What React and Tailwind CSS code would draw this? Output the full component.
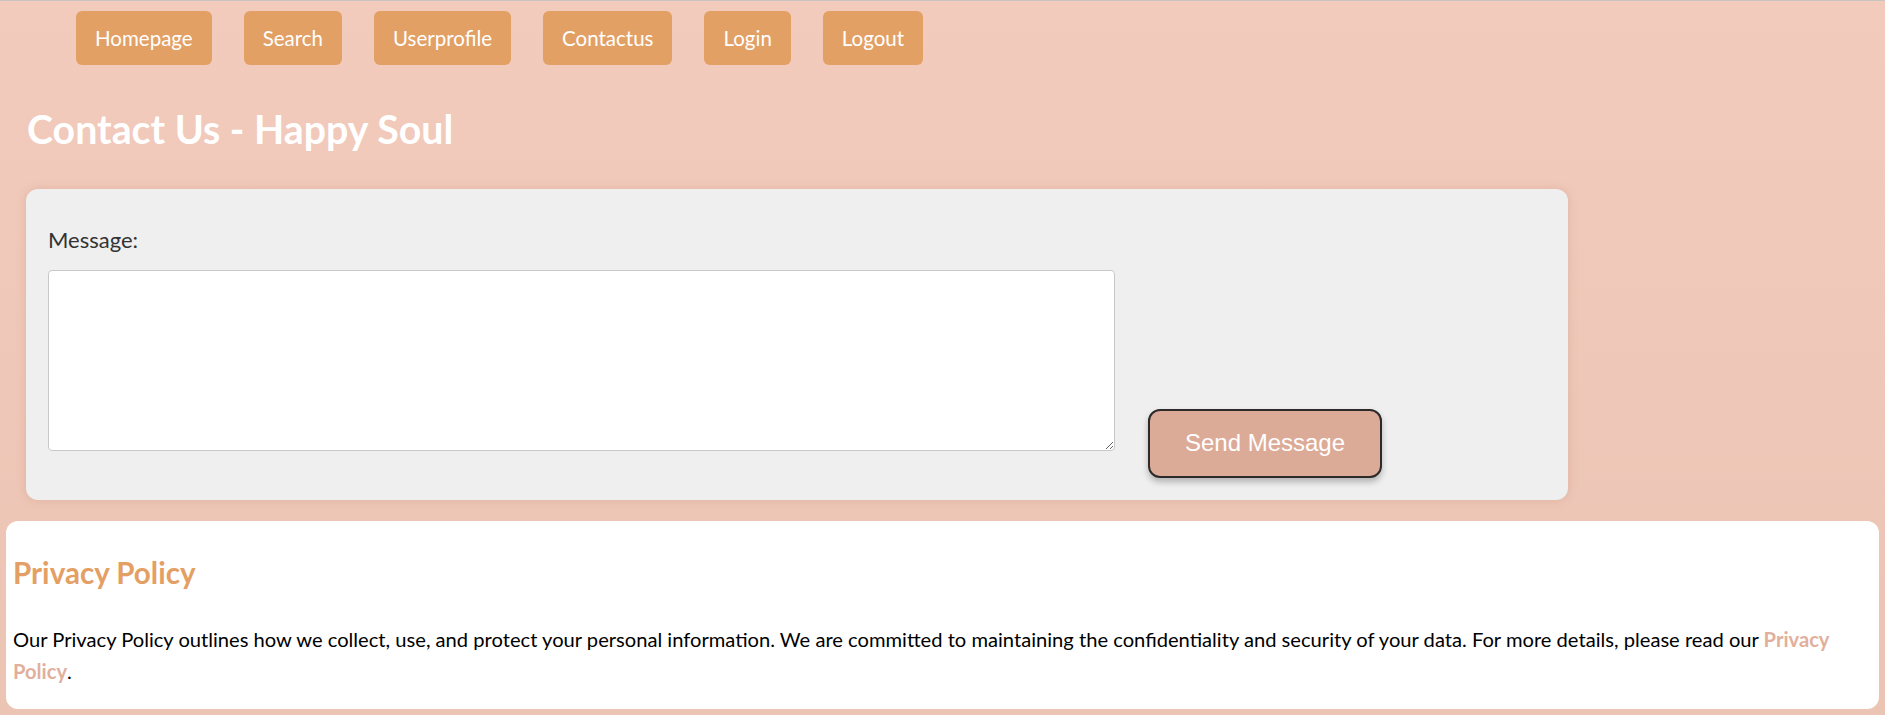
import { useState } from 'react';

const links = ['Homepage', 'Search', 'Userprofile', 'Contactus', 'Login', 'Logout'];

const App = () => {
  const [message, setMessage] = useState('');

  return (
    <div className="min-h-[715px] border-t border-[#c9c4c2] bg-gradient-to-b from-[#f2cbbc] to-[#ecc4b4] font-['Lato',sans-serif] text-black">
      {/* top navigation */}
      <nav className="flex gap-8 pl-[76px] pt-[10px]">
        {links.map((label) => (
          <a
            key={label}
            href="#"
            className="flex h-[54px] items-center rounded-[6px] bg-[#e3a064] px-[19px] text-[20.5px] text-white"
          >
            {label}
          </a>
        ))}
      </nav>

      <h1 className="ml-[27px] mt-[40px] text-[39.3px] font-bold leading-[1.2] text-white">
        Contact Us - Happy Soul
      </h1>

      {/* contact form card */}
      <form
        className="ml-[26px] mt-[37px] w-[1542px] rounded-[12px] bg-[#efefef] px-[22px] pb-[22px] pt-[38px] shadow-[0_0_10px_rgba(180,120,100,0.25)]"
        onSubmit={(e) => e.preventDefault()}
      >
        <label htmlFor="message" className="block text-[22px] leading-[1.2] text-[#333]">
          Message:
        </label>
        <div className="mt-[16px] flex items-end gap-[33px]">
          <textarea
            id="message"
            value={message}
            onChange={(e) => setMessage(e.target.value)}
            className="mb-[27px] h-[181px] w-[1067px] rounded-[4px] border border-[#c8c8c8] bg-white p-2"
          />
          <button
            type="submit"
            className="h-[69px] w-[234px] rounded-[12px] border-2 border-[#2d2a29] bg-[#dcab98] font-['Liberation_Sans',sans-serif] text-[24px] text-white shadow-[0_4px_6px_rgba(0,0,0,0.25)]"
          >
            Send Message
          </button>
        </div>
      </form>

      {/* privacy footer */}
      <footer className="mx-[6px] mt-[21px] rounded-[12px] bg-white px-[7px] pb-[22px] pt-[34px]">
        <h2 className="text-[29.6px] font-bold leading-[1.2] text-[#e4a064]">Privacy Policy</h2>
        <p className="mt-[33px] text-[20.15px] leading-[32px]">
          Our Privacy Policy outlines how we collect, use, and protect your personal information. We are
          committed to maintaining the confidentiality and security of your data. For more details, please
          read our{' '}
          <a href="#" className="font-bold text-[#e1af9c]">
            Privacy Policy
          </a>
          .
        </p>
      </footer>
    </div>
  );
};

export default App;
